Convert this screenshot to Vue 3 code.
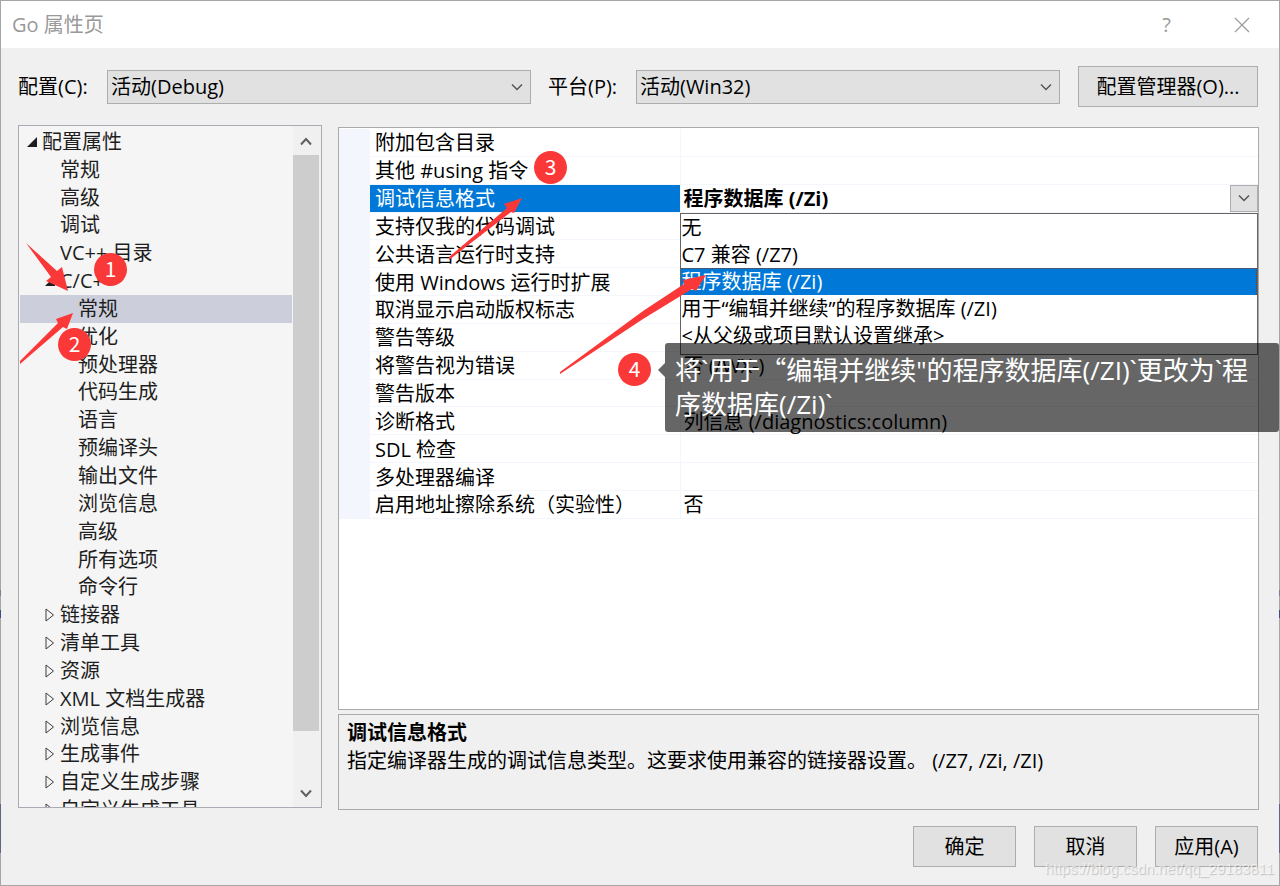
<script setup>
import { ref } from 'vue'

const config = ref('debug')
const platform = ref('win32')

const tree = [
  { text: '配置属性', level: 0, state: 'open' },
  { text: '常规', level: 1 },
  { text: '高级', level: 1 },
  { text: '调试', level: 1 },
  { text: 'VC++ 目录', level: 1 },
  { text: 'C/C++', level: 1, state: 'open' },
  { text: '常规', level: 2, selected: true },
  { text: '优化', level: 2 },
  { text: '预处理器', level: 2 },
  { text: '代码生成', level: 2 },
  { text: '语言', level: 2 },
  { text: '预编译头', level: 2 },
  { text: '输出文件', level: 2 },
  { text: '浏览信息', level: 2 },
  { text: '高级', level: 2 },
  { text: '所有选项', level: 2 },
  { text: '命令行', level: 2 },
  { text: '链接器', level: 1, state: 'closed' },
  { text: '清单工具', level: 1, state: 'closed' },
  { text: '资源', level: 1, state: 'closed' },
  { text: 'XML 文档生成器', level: 1, state: 'closed' },
  { text: '浏览信息', level: 1, state: 'closed' },
  { text: '生成事件', level: 1, state: 'closed' },
  { text: '自定义生成步骤', level: 1, state: 'closed' },
  { text: '自定义生成工具', level: 1, state: 'closed' },
]

const rows = [
  { name: '附加包含目录', value: '' },
  { name: '其他 #using 指令', value: '' },
  { name: '调试信息格式', value: '程序数据库 (/Zi)', active: true },
  { name: '支持仅我的代码调试', value: '' },
  { name: '公共语言运行时支持', value: '' },
  { name: '使用 Windows 运行时扩展', value: '' },
  { name: '取消显示启动版权标志', value: '' },
  { name: '警告等级', value: '' },
  { name: '将警告视为错误', value: '否 (/WX-)' },
  { name: '警告版本', value: '' },
  { name: '诊断格式', value: '列信息 (/diagnostics:column)' },
  { name: 'SDL 检查', value: '' },
  { name: '多处理器编译', value: '' },
  { name: '启用地址擦除系统（实验性）', value: '否' },
]

const options = [
  '无',
  'C7 兼容 (/Z7)',
  '程序数据库 (/Zi)',
  '用于“编辑并继续”的程序数据库 (/ZI)',
  '<从父级或项目默认设置继承>',
]
</script>

<template>
  <div class="frame">
    <main class="dialog">
      <header class="titlebar">
        <h1>Go 属性页</h1>
        <button class="caption" aria-label="帮助">?</button>
        <button class="caption" aria-label="关闭">
          <svg width="16" height="16" viewBox="0 0 16 16"><path d="M1 1L15 15M15 1L1 15" fill="none" stroke="#9c9c9c" stroke-width="1.2" /></svg>
        </button>
      </header>

      <div class="toolbar">
        <label class="first" for="config">配置(C):</label>
        <span class="combo">
          <select id="config" v-model="config"><option value="debug">活动(Debug)</option></select>
          <svg width="12" height="8" viewBox="0 0 12 8"><path d="M1 1.5L6 6.5L11 1.5" /></svg>
        </span>
        <label class="second" for="platform">平台(P):</label>
        <span class="combo">
          <select id="platform" v-model="platform"><option value="win32">活动(Win32)</option></select>
          <svg width="12" height="8" viewBox="0 0 12 8"><path d="M1 1.5L6 6.5L11 1.5" /></svg>
        </span>
        <button class="push manager">配置管理器(O)...</button>
      </div>

      <div class="content">
        <nav class="tree">
          <ul>
            <li v-for="(node, i) in tree" :key="i" :class="['level' + node.level, { selected: node.selected }]">
              <span class="twisty">
                <svg v-if="node.state === 'open'" width="10" height="10" viewBox="0 0 10 10"><path d="M10 0V10H0Z" fill="#1e1e1e" /></svg>
                <svg v-if="node.state === 'closed'" width="10" height="14" viewBox="0 0 10 14"><path d="M1 1L8.5 7L1 13Z" fill="none" stroke="#3c3c3c" /></svg>
              </span>
              <span>{{ node.text }}</span>
            </li>
          </ul>
          <div class="scrollbar">
            <button aria-label="向上滚动"><svg width="12" height="9" viewBox="0 0 12 9"><path d="M1 7.5L6 2L11 7.5" /></svg></button>
            <div class="thumb"></div>
            <div class="track"></div>
            <button aria-label="向下滚动"><svg width="12" height="9" viewBox="0 0 12 9"><path d="M1 1.5L6 7L11 1.5" /></svg></button>
          </div>
        </nav>

        <div class="right">
          <section class="grid">
            <table>
              <tbody>
                <tr v-for="row in rows" :key="row.name" :class="{ active: row.active }">
                  <td class="gutter"></td>
                  <th scope="row">{{ row.name }}</th>
                  <td class="value">
                    <template v-if="row.active">
                      <span>{{ row.value }}</span>
                      <button class="drop" aria-label="展开">
                        <svg width="12" height="8" viewBox="0 0 12 8"><path d="M1 1.5L6 6.5L11 1.5" /></svg>
                      </button>
                      <ul class="options" role="listbox">
                        <li v-for="o in options" :key="o" role="option" :aria-selected="o === row.value" :class="{ chosen: o === row.value }">{{ o }}</li>
                      </ul>
                    </template>
                    <template v-else>{{ row.value }}</template>
                  </td>
                </tr>
              </tbody>
            </table>
          </section>
          <section class="description">
            <h2>调试信息格式</h2>
            <p>指定编译器生成的调试信息类型。这要求使用兼容的链接器设置。 (/Z7, /Zi, /ZI)</p>
          </section>
        </div>
      </div>

      <footer class="actions">
        <button class="push">确定</button>
        <button class="push">取消</button>
        <button class="push">应用(A)</button>
      </footer>
    </main>

    <svg class="arrows" width="720" height="390" viewBox="0 0 720 390" fill="#fb3838">
      <path d="M26 243L57 271L62 267L68 291L46 281L51 277Z" />
      <path d="M20 364L20 361L58 323L56 319L73 313L67 329L63 327Z" />
      <path d="M449 260L449 257L507 208L504 204L522 198L514 213L511 212Z" />
      <path d="M560 374L560 372L643 311L684 284L683 280L706 275L696 291L692 289L643 319Z" />
    </svg>
    <span class="badge b1">1</span>
    <span class="badge b2">2</span>
    <span class="badge b3">3</span>
    <span class="badge b4">4</span>
    <div class="note">将`用于<span class="wide">“</span>编辑并继续"的程序数据库(/ZI)`更改为`程序数据库(/Zi)`</div>
    <span class="watermark">https://blog.csdn.net/qq_29183811</span>
  </div>
</template>

<style>
body { margin: 0; }
</style>

<style scoped>
* { box-sizing: border-box; }

.frame {
  position: relative;
  display: flex;
  min-height: 100vh;
  padding: 1px;
  overflow: hidden;
  background: linear-gradient(#a6a6a6 590px, #7a7f9c 590px, #7a7f9c 596px, #a6a6a6 596px, #a6a6a6 610px, #3a4f86 610px, #3a4f86 618px, #a6a6a6 618px, #a6a6a6 804px, #5d6685 804px, #5d6685 853px, #a6a6a6 853px);
  font-family: "Open Sans", "Noto Sans CJK SC", sans-serif;
  font-size: 20px;
  line-height: 28px;
  color: #000;
}
.dialog {
  flex: 1;
  display: flex;
  flex-direction: column;
  min-width: 0;
  background: #f0f0f0;
}
ul { list-style: none; margin: 0; padding: 0; }
button, select { font: inherit; color: inherit; margin: 0; }

.titlebar {
  display: flex;
  align-items: center;
  height: 47px;
  padding-left: 11px;
  background: #fff;
  color: #999;
}
h1 { flex: 1; margin: 0; font-size: 20px; font-weight: 400; }
.caption {
  display: grid;
  place-items: center;
  width: 75px;
  height: 47px;
  padding: 0;
  border: 0;
  background: none;
}

.toolbar {
  display: flex;
  align-items: center;
  padding: 18px 21px 0 17px;
}
.first { width: 89px; }
.second { width: 105px; padding-left: 17px; }
.combo { position: relative; flex: 1; display: flex; align-items: center; }
.combo select {
  appearance: none;
  width: 100%;
  height: 34px;
  padding: 0 30px 0 3px;
  border: 1px solid #adadad;
  border-radius: 0;
  background: #e1e1e1;
}
.combo svg { position: absolute; right: 8px; pointer-events: none; }
.combo path, .drop path { fill: none; stroke: #555; stroke-width: 1.5; }
.push {
  width: 103px;
  height: 41px;
  padding: 0;
  border: 1px solid #adadad;
  background: #e1e1e1;
}
.manager { width: 180px; margin-left: 18px; }

.content {
  flex: 1;
  display: flex;
  gap: 16px;
  min-height: 0;
  padding: 18px 20px 0 17px;
}
.tree {
  display: flex;
  width: 304px;
  height: 683px;
  border: 1px solid #aaabb5;
  background: #f5f5f5;
  color: #1e1e1e;
  overflow: hidden;
}
.tree ul {
  flex: 1;
  display: grid;
  grid-template-rows: repeat(25, minmax(0, 1fr));
  height: 696px;
  margin: 2px 1px 0;
}
.tree li { display: flex; align-items: center; line-height: 28px; }
.tree .selected { background: #cccedb; }
.twisty { display: flex; width: 15px; }
.level0 { padding-left: 7px; }
.level1 { padding-left: 25px; }
.level2 { padding-left: 43px; }
.scrollbar {
  display: flex;
  flex-direction: column;
  width: 28px;
  padding: 1px 2px 0 0;
  background: #f0f0f0;
}
.scrollbar button {
  display: grid;
  place-items: center;
  height: 28px;
  padding: 0;
  border: 0;
  background: none;
}
.scrollbar path { fill: none; stroke: #606060; stroke-width: 2; }
.thumb { flex: 575; background: #cdcdcd; }
.track { flex: 48; }

.right {
  flex: 1;
  display: flex;
  flex-direction: column;
  gap: 4px;
  min-width: 0;
  padding-top: 2px;
}
.grid { height: 583px; padding-top: 1px; border: 1px solid #aaa; background: #fff; }
table {
  width: 100%;
  height: 390px;
  table-layout: fixed;
  border-collapse: collapse;
}
td, th {
  padding: 2px 0 0;
  line-height: 24px;
  border-bottom: 1px solid #f3f6fc;
  font-weight: 400;
  text-align: left;
  white-space: nowrap;
}
.gutter { width: 31px; background: #f3f6fc; }
th { width: 310px; padding-left: 5px; border-right: 1px solid #f3f6fc; }
.value { position: relative; padding-left: 3px; }
.active th { background: #0078d7; color: #fff; }
.active .value { font-weight: 700; }
.drop {
  position: absolute;
  top: 0;
  right: 0;
  display: grid;
  place-items: center;
  width: 28px;
  height: 27px;
  padding: 0;
  border: 1px solid #adadad;
  background: #e1e1e1;
}
.options {
  position: absolute;
  z-index: 1;
  top: 28px;
  left: -1px;
  right: 0;
  padding-bottom: 5px;
  border: 1px solid #646464;
  background: #fff;
  font-weight: 400;
}
.options li { height: 27px; padding-left: 1px; line-height: 28px; }
.options .chosen { background: #0078d7; color: #fff; border-top: 1px dotted #803c10; border-right: 1px dotted #803c10; line-height: 26px; }

.description {
  height: 96px;
  padding: 4px 8px;
  border: 1px solid #aaa;
}
h2 { margin: 0; font-size: 20px; line-height: 28px; font-weight: 700; }
p { margin: 0; }

.actions {
  display: flex;
  justify-content: flex-end;
  gap: 18px;
  padding: 16px 21px 18px;
}

.arrows { position: absolute; top: 0; left: 0; z-index: 2; pointer-events: none; }
.badge {
  position: absolute;
  z-index: 3;
  width: 33px;
  height: 33px;
  border-radius: 50%;
  background: #fb3838;
  color: #fff;
  font-family: "Noto Sans CJK SC", sans-serif;
  font-size: 21px;
  line-height: 31px;
  text-align: center;
}
.b1 { left: 94px; top: 253px; }
.b2 { left: 58px; top: 328px; }
.b3 { left: 534px; top: 151px; }
.b4 { left: 618px; top: 353px; }
.note {
  position: absolute;
  z-index: 3;
  left: 665px;
  right: 1px;
  top: 343px;
  padding: 10px 20px 11px 10px;
  border-radius: 3px;
  background: rgba(0, 0, 0, 0.6);
  color: #fff;
  font-size: 26px;
  line-height: 34px;
  word-break: break-all;
}
.wide { font-family: "Noto Sans CJK SC", sans-serif; line-height: 1px; }
.note::before {
  content: "";
  position: absolute;
  left: -7px;
  top: 20px;
  border: 7px solid transparent;
  border-left: 0;
  border-right-color: rgba(0, 0, 0, 0.6);
}
.watermark {
  position: absolute;
  right: 6px;
  bottom: 8px;
  font-family: "Liberation Sans", sans-serif;
  font-size: 15px;
  line-height: 18px;
  color: rgba(255, 255, 255, 0.6);
  text-shadow: 1px 1px 1px rgba(0, 0, 0, 0.2);
}
</style>
